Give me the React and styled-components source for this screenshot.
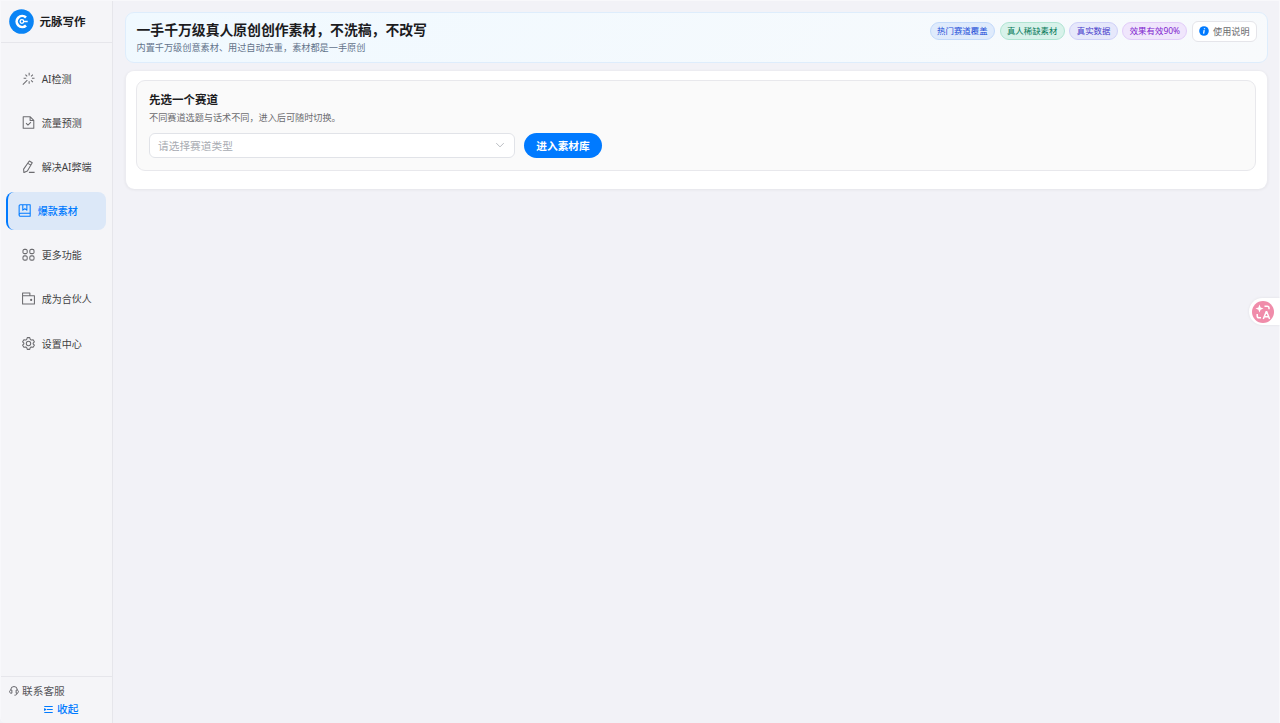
import React from "react";
import styled, { createGlobalStyle, css } from "styled-components";

const iconPaths = {
    magic: (
        <path d="M8.8 1v3.2M8.8 11.4v3.2M2 7.8h3.2M12.2 7.8h3.2M4.2 3.2l2.2 2.2M13.4 3.2l-2.2 2.2M13.4 12.4l-2.2-2.2M6.6 10L1 15.4" />
    ),
    document: (
        <>
            <path d="M1.5 1h8.7l4.3 4.3V15h-13zM10 1v4.5h4.5" />
            <path d="M5 8.8l2.3 2.3L11 7.4" />
        </>
    ),
    pen: (
        <path d="M9 1.2l3.6 2.1-6 10.2-4.3 2-.3-4.3zM7.3 4.2l3.6 2.1M8.500 15.200h7" />
    ),
    collection: (
        <>
            <path d="M3 .9h12v14.2H3c-1 0-1.6-.7-1.6-1.6v-11C1.4 1.5 2 .9 3 .9z" />
            <path d="M1.5 13c0-1 .7-1.600 1.600-1.600H15M5.900 1.100v6.500l2.500-1.800 2.500 1.800V1.100" />
        </>
    ),
    grid: (
        <>
            <rect x="1.2" y="1.7" width="5.2" height="5.2" rx="1.7" />
            <rect x="9.6" y="1.7" width="5.2" height="5.2" rx="1.7" />
            <rect x="1.2" y="9.7" width="5.2" height="5.2" rx="1.7" />
            <rect x="9.6" y="9.7" width="5.2" height="5.2" rx="1.7" />
        </>
    ),
    wallet: (
        <>
            <path d="M.7 4.7V1.2h9v3.5M.7 4.7h14.6v10.1H.7z" />
            <circle cx="11.3" cy="9.7" r=".7" fill="currentColor" />
        </>
    ),
    setting: (
        <>
            <path d="M6.5.8h3l.7 2.2 1.300.8 2.200-.5 1.500 2.600-1.500 1.600v1l1.500 1.600-1.500 2.600-2.200-.5-1.300.8-.7 2.200h-3L5.800 13l-1.300-.8-2.200.5L.8 10.100l1.500-1.600v-1L.8 5.900l1.500-2.600 2.200.5L5.800 3z" />
            <circle cx="8" cy="8" r="2.7" />
        </>
    ),
    service: (
        <path d="M2.8 6.5V6a5.2 5.2 0 0 1 10.4 0v.5M4.600 6.500v5H3.300c-3.200 0-3.200-5 0-5zM11.400 6.500v5h1.300c3.200 0 3.200-5 0-5zM12.900 11.500c0 2.200-1.500 3.200-4.200 3.200" />
    ),
    fold: <path d="M.5 2.700h15M5 8h10.500M.5 13.300h15M.8 6.600v2.800L3 8z" />,
    down: <path d="M2 5l6 6 6-6" />,
};

const Icon = ({ name, size = 13, stroke = 1.3 }) => (
    <IconSvg viewBox="0 0 16 16" $size={size} strokeWidth={stroke}>
        {iconPaths[name]}
    </IconSvg>
);

const menus = [
    { icon: "magic", label: "AI检测" },
    { icon: "document", label: "流量预测" },
    { icon: "pen", label: "解决AI弊端" },
    { icon: "collection", label: "爆款素材", active: true },
    { icon: "grid", label: "更多功能" },
    { icon: "wallet", label: "成为合伙人" },
    { icon: "setting", label: "设置中心" },
];

const tags = [
    { label: "热门赛道覆盖", color: "#1d4ed8", bg: "#dfebfc", line: "#c3dafa" },
    { label: "真人稀缺素材", color: "#047857", bg: "#d8f2ea", line: "#b0e4d2" },
    { label: "真实数据", color: "#4338ca", bg: "#e6e8fb", line: "#cfd1f8" },
    { label: "效果有效90%", color: "#7e22ce", bg: "#f0e6fc", line: "#e2cdf9" },
];

const App = () => {
    return (
        <>
            <GlobalStyle />
            <Layout>
                <Sidebar>
                    <Brand>
                        <Logo viewBox="0 0 25 25">
                            <circle cx="12.5" cy="12.5" r="12.3" fill="#0a84f5" />
                            <path
                                d="M17 8.500A5.500 5.500 0 1 0 17 16.500"
                                fill="none"
                                stroke="#fff"
                                strokeWidth="2.7"
                            />
                            <path d="M14 12.500h4.700" stroke="#fff" strokeWidth="1.5" />
                            <circle cx="12.9" cy="12.5" r="1.8" fill="#0a84f5" stroke="#fff" strokeWidth="1.3" />
                        </Logo>
                        元脉写作
                    </Brand>
                    <Menu>
                        {menus.map((item) => (
                            <MenuItem key={item.label} $active={item.active}>
                                <Icon name={item.icon} />
                                {item.label}
                            </MenuItem>
                        ))}
                    </Menu>
                    <SideFooter>
                        <Service>
                            <Icon name="service" size={10} stroke={1.4} />
                            联系客服
                        </Service>
                        <Fold>
                            <Icon name="fold" size={9} stroke={1.9} />
                            收起
                        </Fold>
                    </SideFooter>
                </Sidebar>

                <Main>
                    <Banner>
                        <div>
                            <Title>一手千万级真人原创创作素材，不洗稿，不改写</Title>
                            <SubTitle>
                                内置千万级创意素材、用过自动去重，素材都是一手原创
                            </SubTitle>
                        </div>
                        <Tags>
                            {tags.map((tag) => (
                                <Tag key={tag.label} $color={tag.color} $bg={tag.bg} $line={tag.line}>
                                    {tag.label}
                                </Tag>
                            ))}
                            <HelpBtn>
                                <InfoSvg viewBox="0 0 10 10">
                                    <circle cx="5" cy="5" r="4.8" fill="#007aff" />
                                    <path d="M5.200 4.200L4.600 7.700M5.500 2.200v1.100" stroke="#fff" strokeWidth="1.3" />
                                </InfoSvg>
                                使用说明
                            </HelpBtn>
                        </Tags>
                    </Banner>

                    <Card>
                        <Panel>
                            <PanelTitle>先选一个赛道</PanelTitle>
                            <PanelDesc>不同赛道选题与话术不同，进入后可随时切换。</PanelDesc>
                            <FormRow>
                                <Select>
                                    请选择赛道类型
                                    <Icon name="down" size={10} stroke={1.5} />
                                </Select>
                                <EnterBtn>进入素材库</EnterBtn>
                            </FormRow>
                        </Panel>
                    </Card>
                </Main>

                <Translate>
                    <TranslateSvg viewBox="0 0 22 22">
                        <circle cx="11" cy="11" r="11" fill="#f08caa" />
                        <path d="M7.5 3.6l1.1 2.9 2.9 1.100-2.900 1.100-1.100 2.900-1.100-2.900-2.900-1.100 2.900-1.100z" fill="#fff" />
                        <path
                            d="M12.5 5.2h2.7c1.2 0 1.8.7 1.8 1.8v1.3M5.2 13v2c0 1.2.7 1.8 1.8 1.8h2M11.300 18l2.900-7.300h.5l2.900 7.300M12.300 15.700h4.300"
                            fill="none"
                            stroke="#fff"
                            strokeWidth="1.5"
                        />
                    </TranslateSvg>
                </Translate>
            </Layout>
        </>
    );
};

const GlobalStyle = createGlobalStyle`
    * {
        box-sizing: border-box;
    }
    body {
        margin: 0;
        background: #f2f2f7;
        font-family: "Noto Sans", "Noto Sans CJK SC", sans-serif;
    }
    h1, h2, p {
        margin: 0;
    }
    button {
        font-family: inherit;
    }
`;

const Layout = styled.div`
    display: flex;
    height: 723px;
    overflow: hidden;
    border: 1px solid #f8f8fb;
    border-bottom: 0;
    border-radius: 0 0 0 6px;
`;

const IconSvg = styled.svg`
    width: ${(props) => props.$size}px;
    height: ${(props) => props.$size}px;
    flex-shrink: 0;
    fill: none;
    stroke: currentColor;
    stroke-linejoin: round;
`;

const Sidebar = styled.aside`
    display: flex;
    flex-direction: column;
    width: 112px;
    flex-shrink: 0;
    background: #f5f5f8;
    border-right: 1px solid #e6e6eb;
`;

const Brand = styled.div`
    display: flex;
    align-items: center;
    gap: 5.5px;
    height: 42px;
    padding: 0 0 1px 8px;
    border-bottom: 1px solid #e6e6eb;
    color: #1c1c1e;
    font-size: 11.5px;
    font-weight: 700;
`;

const Logo = styled.svg`
    width: 25px;
    height: 25px;
`;

const Menu = styled.nav`
    display: flex;
    flex-direction: column;
    flex: 1;
    gap: 6.15px;
    padding: 16.2px 6px 0 5px;
`;

const MenuItem = styled.div`
    display: flex;
    align-items: center;
    gap: 6.7px;
    height: 38px;
    padding-left: 16px;
    border-radius: 8px;
    color: #3f3f42;
    font-size: 10px;
    white-space: nowrap;
    svg {
        color: #6c6c70;
    }
    ${(props) =>
        props.$active &&
        css`
            padding-left: 10px;
            border-left: 2px solid #007aff;
            background: #dce8f8;
            color: #007aff;
            font-weight: 500;
            svg {
                color: #007aff;
            }
        `}
`;

const SideFooter = styled.div`
    height: 47px;
    padding: 5px 0 0 8px;
    border-top: 1px solid #e6e6eb;
    font-size: 10.7px;
    line-height: 18px;
`;

const Service = styled.div`
    display: flex;
    align-items: center;
    gap: 3px;
    color: #55555a;
`;

const Fold = styled.div`
    display: flex;
    align-items: center;
    gap: 4px;
    padding-left: 35px;
    color: #007aff;
    font-weight: 500;
`;

const Main = styled.main`
    flex: 1;
    padding: 11px 11.5px 0 12px;
`;

const Banner = styled.section`
    display: flex;
    justify-content: space-between;
    height: 51px;
    padding: 7px 10px 0 10.5px;
    border: 1px solid #deedfc;
    border-radius: 9px;
    background: linear-gradient(135deg, #f0f9ff, #f8fafc);
`;

const Title = styled.h1`
    color: #1c1c1e;
    font-size: 13.83px;
    font-weight: 700;
    line-height: 19px;
`;

const SubTitle = styled.p`
    color: #64748b;
    font-size: 9.17px;
    line-height: 18px;
`;

const Tags = styled.div`
    display: flex;
    align-items: center;
    gap: 4.7px;
    height: 22px;
`;

const Tag = styled.span`
    height: 18px;
    padding: 0 6.3px;
    border: 1px solid ${(props) => props.$line};
    border-radius: 9px;
    background: ${(props) => props.$bg};
    color: ${(props) => props.$color};
    font-size: 8.43px;
    line-height: 16px;
`;

const HelpBtn = styled.button`
    display: flex;
    align-items: center;
    gap: 4px;
    height: 21px;
    padding: 0 6px;
    border: 1px solid #e5e5ea;
    border-radius: 6px;
    background: #fff;
    color: #6c6c70;
    font-size: 9.15px;
`;

const InfoSvg = styled.svg`
    width: 10px;
    height: 10px;
`;

const Card = styled.section`
    height: 119px;
    margin-top: 7px;
    padding: 10px 11.5px 10px 11px;
    border: 1px solid #ececf1;
    border-width: 1px 1px 0;
    padding: 9px 10.5px 10px 10px;
    border-radius: 9px;
    background: #fff;
    box-shadow: 0 1px 3px rgba(0, 0, 0, 0.06);
`;

const Panel = styled.div`
    height: 91px;
    padding: 10px 12px;
    border: 1px solid #e8e8ec;
    border-radius: 9px;
    background: #fafafa;
`;

const PanelTitle = styled.h2`
    color: #1c1c1e;
    font-size: 11.5px;
    font-weight: 700;
    line-height: 18px;
`;

const PanelDesc = styled.p`
    color: #6c6c70;
    font-size: 9.15px;
    line-height: 18px;
`;

const FormRow = styled.div`
    display: flex;
    gap: 9px;
    margin-top: 6px;
`;

const Select = styled.div`
    display: flex;
    align-items: center;
    justify-content: space-between;
    width: 366px;
    height: 25px;
    padding: 0 9px 1px 8px;
    border: 1px solid #e1e3e8;
    border-radius: 6px;
    background: #fff;
    color: #a8abb2;
    font-size: 10.7px;
    svg {
        color: #b4b7bd;
    }
`;

const EnterBtn = styled.button`
    width: 78px;
    height: 25px;
    padding: 0 0 1px;
    border: 0;
    border-radius: 13px;
    background: #007aff;
    color: #fff;
    font-size: 10.7px;
    font-weight: 700;
`;

const Translate = styled.div`
    position: fixed;
    top: 298px;
    right: 0;
    display: flex;
    align-items: center;
    width: 31px;
    height: 27px;
    padding-left: 3px;
    border-radius: 14px 0 0 14px;
    background: #fff;
    box-shadow: 0 0 3px rgba(0, 0, 0, 0.08);
`;

const TranslateSvg = styled.svg`
    width: 22px;
    height: 22px;
`;

export default App;
